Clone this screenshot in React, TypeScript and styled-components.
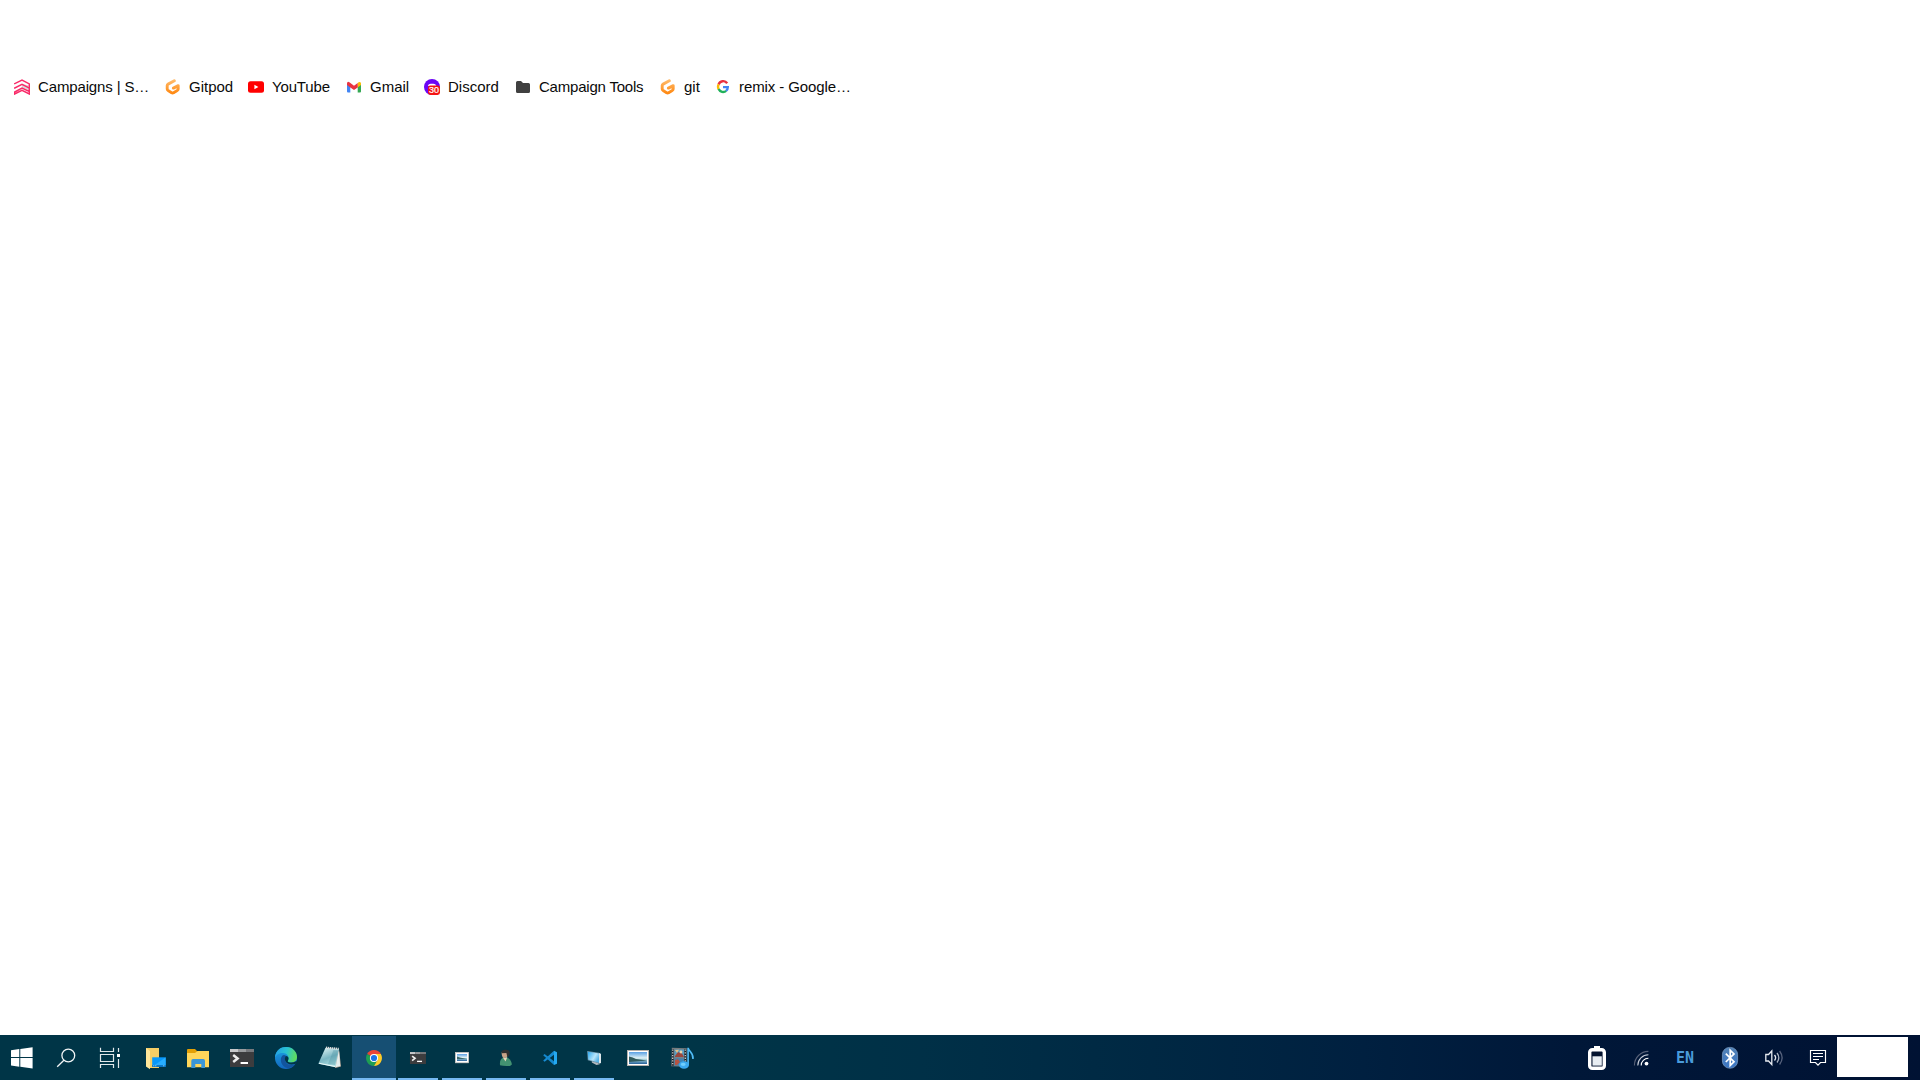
import React from "react";
import styled, { createGlobalStyle } from "styled-components";

const GlobalStyle = createGlobalStyle`
  * { box-sizing: border-box; }
  html, body { margin: 0; padding: 0; background: #fff; overflow: hidden; }
`;

const Screen = styled.div`
  width: 1920px;
  height: 1080px;
  display: flex;
  flex-direction: column;
  background: #fff;
  font-family: "Liberation Sans", Arial, sans-serif;
`;

const BookmarksBar = styled.nav`
  display: flex;
  align-items: center;
  height: 34px;
  margin-top: 70px;
  padding-left: 14px;
`;

const Bookmark = styled.div<{ $width: number; $gap: number; $tracking: number }>`
  display: flex;
  align-items: center;
  gap: ${(p) => p.$gap}px;
  width: ${(p) => p.$width}px;
  flex: none;
  color: #0a0a0a;
  font-size: 15px;
  line-height: 20px;
  letter-spacing: ${(p) => p.$tracking}px;
  white-space: nowrap;
`;

const Favicon = styled.svg`
  display: block;
  width: 16px;
  height: 16px;
  flex: none;
`;

const Page = styled.main`
  flex: 1;
`;

const Taskbar = styled.footer`
  display: flex;
  justify-content: space-between;
  height: 45px;
  background: linear-gradient(to right, #003547 0%, #003547 36%, #003047 48%, #002843 60%, #002040 71%, #001738 82%, #001233 100%);
`;

const Apps = styled.div`
  display: flex;
`;

const Slot = styled.div<{ $state?: "active" | "running" }>`
  display: flex;
  flex-direction: column;
  align-items: center;
  width: 44px;
  height: 45px;
  background: ${(p) =>
    p.$state === "active" ? "linear-gradient(transparent 1px, #164f73 1px)" : "transparent"};

  &::after {
    content: "";
    flex: none;
    width: ${(p) => (p.$state === "active" ? 44 : 40)}px;
    height: 2px;
    background: ${(p) => (p.$state ? "#76b9f2" : "transparent")};
  }
`;

const SlotIcon = styled.svg`
  display: block;
  width: 44px;
  height: 43px;
  flex: none;
`;

const Tray = styled.div`
  display: flex;
  padding-right: 12px;
`;

const TraySlot = styled.div<{ $width?: number }>`
  width: ${(p) => p.$width ?? 44}px;
  height: 45px;
`;

const Language = styled.div`
  width: 44px;
  padding-top: 2px;
  text-align: center;
  color: #4a9bdb;
  font: bold 15px/43px "DejaVu Sans Mono", monospace;
`;

const Clock = styled.div`
  width: 71px;
  height: 40px;
  margin-top: 2px;
  background: #fff;
`;

const GitpodIcon = () => (
  <Favicon viewBox="0 0 16 16">
    <defs>
      <linearGradient id="gp" x1="0" y1="0" x2="0" y2="1">
        <stop offset="0" stopColor="#ffb866" />
        <stop offset="1" stopColor="#ff8a14" />
      </linearGradient>
    </defs>
    <path d="M9.3 1.8 L3.1 5.1 Q2.2 5.6 2.2 6.6 V10.1 Q2.2 11.1 3.1 11.6 L6.6 13.7 Q7.6 14.2 8.6 13.7 L12.2 11.6 Q13.2 11 13.2 10 V6.6 L8.4 9.1" fill="none" stroke="url(#gp)" strokeWidth="2.9" strokeLinecap="round" strokeLinejoin="round" />
  </Favicon>
);

const bookmarks = [
  {
    label: "Campaigns | S…", width: 151, gap: 8, tracking: -0.14,
    icon: (
      <Favicon viewBox="0 0 16 16">
        <path d="M8 9 L15 12.5 V6.5 L8 5Z" fill="#dcdadb" />
        <path d="M.7 5.3 V4.7 L8 1.1 L15.3 4.9 V15 L8 11.3 L.7 15 V13 L8 9.1 L15 12.4 M.7 9.8 V9 L8 5.3 L15 8.9" fill="none" stroke="#f92a68" strokeWidth="1.45" />
      </Favicon>
    ),
  },
  { label: "Gitpod", width: 83, gap: 8, tracking: 0, icon: <GitpodIcon /> },
  {
    label: "YouTube", width: 98, gap: 8, tracking: -0.15,
    icon: (
      <Favicon viewBox="0 0 16 16">
        <rect x="0" y="2.3" width="16" height="11.5" rx="2.5" fill="#f00" />
        <path d="M6.4 5.8 L10.4 8 L6.4 10.2Z" fill="#fff" />
      </Favicon>
    ),
  },
  {
    label: "Gmail", width: 78, gap: 8, tracking: 0,
    icon: (
      <Favicon viewBox="0 0 16 16">
        <path d="M1 4.5 L4.3 6.8 V13.5 H2 Q1 13.5 1 12.5Z" fill="#4285f4" />
        <path d="M11.7 6.8 L15 4.5 V12.5 Q15 13.5 14 13.5 H11.7Z" fill="#34a853" />
        <path d="M11.7 4.1 L12.6 3.2 Q15 2.2 15 4.5 V6 L11.7 8.5Z" fill="#fbbc04" />
        <path d="M1 4.5 Q1.2 2 3.4 3.2 L8 6.8 L11.7 4 V8.5 L8 11 L4.3 8.5 L1 6Z" fill="#ea3340" />
      </Favicon>
    ),
  },
  {
    label: "Discord", width: 92, gap: 8, tracking: 0,
    icon: (
      <Favicon viewBox="0 0 16 16">
        <circle cx="8" cy="8" r="8" fill="#6b05f5" />
        <path d="M3.8 7 Q4.6 4.8 6.6 4.8 H9.4 Q11.6 4.8 12.4 7Z" fill="#fff" />
        <rect x="4" y="6.6" width="12" height="9.4" rx="2.4" fill="#f41414" />
        <text x="9.9" y="14.4" fontFamily="Liberation Sans" fontSize="9" fill="#fff" stroke="#fff" strokeWidth=".2" textAnchor="middle">30</text>
      </Favicon>
    ),
  },
  {
    label: "Campaign Tools", width: 144, gap: 7, tracking: -0.21,
    icon: (
      <Favicon viewBox="0 0 16 16">
        <path d="M0 3.5 Q0 2 1.5 2 H5 L7 4 H12.5 Q14 4 14 5.5 V12.5 Q14 14 12.5 14 H1.5 Q0 14 0 12.5Z" fill="#404040" />
      </Favicon>
    ),
  },
  { label: "git", width: 56, gap: 8, tracking: 0, icon: <GitpodIcon /> },
  {
    label: "remix - Google…", width: 140, gap: 7, tracking: -0.1,
    icon: (
      <Favicon viewBox="0 0 16 16" fill="none" strokeWidth="2.4">
        <path d="M11.2 4.2 A4.9 4.9 0 0 0 2.6 5.5" stroke="#ea3340" />
        <path d="M2.7 5.4 A4.9 4.9 0 0 0 2.7 10.2" stroke="#fbbc04" />
        <path d="M2.6 10.1 A4.9 4.9 0 0 0 10.2 11.8" stroke="#20b15a" />
        <path d="M7 8.1 H11.8 Q11.8 10.6 10.1 11.9" stroke="#4285f4" />
      </Favicon>
    ),
  },
];

const TerminalShape = () => (
  <>
    <rect x="10" y="14" width="24" height="18" fill="#3c3c3e" />
    <path d="M10 14H18V17H10Z" fill="#c7c8ca" />
    <path d="M18 14H26V17H18Z" fill="#999b9e" />
    <path d="M26 14H34V17H26Z" fill="#77797d" />
    <path d="M13.2 20 L17.6 23.5 L13.2 27" fill="none" stroke="#ededed" strokeWidth="2.5" />
    <path d="M20.6 28H28" stroke="#fff" strokeWidth="2" />
  </>
);

const PhotoShape = ({ small = false }: { small?: boolean }) => (
  <>
    <defs>
      <linearGradient id={small ? "skyS" : "sky"} x1="0" y1="0" x2="0" y2="1">
        <stop offset="0" stopColor="#5aa0e4" />
        <stop offset=".5" stopColor="#e0f2f5" />
        <stop offset=".65" stopColor="#9cc9d5" />
        <stop offset="1" stopColor="#235e99" />
      </linearGradient>
    </defs>
    {small ? (
      <>
        <rect x="15.4" y="17.4" width="13.2" height="10.4" fill="#fff" stroke="#cfc9c4" strokeWidth=".7" />
        <rect x="17" y="19" width="10" height="7" fill="url(#skyS)" />
        <path d="M17 21.6L20 22.5L27 24H17Z" fill="#3b686c" />
      </>
    ) : (
      <>
        <rect x="11.5" y="15.5" width="21" height="15" fill="#fff" stroke="#b5b0ab" />
        <rect x="13" y="17" width="18" height="12" fill="url(#sky)" />
        <path d="M13 21.5 Q17 22 20 24 L31 25.5 L25 26 L13 27Z" fill="#315b5d" />
      </>
    )}
  </>
);

type TaskbarApp = { icon: React.ReactNode; state?: "active" | "running" };

const apps: TaskbarApp[] = [
  { icon: <path d="M11 15.3 L19.3 14.1 V22 H11Z M20.3 14 L32.6 12.3 V22 H20.3Z M11 23H19.3V31.7L11 30.6Z M20.3 23H32.6V33.4L20.3 31.8Z" fill="#fff" /> },
  {
    icon: (
      <g fill="none" stroke="#f1f5f6" strokeWidth="1.3">
        <circle cx="24.3" cy="20.5" r="6.4" />
        <path d="M19.9 25.2 L13.2 31.7" />
      </g>
    ),
  },
  {
    icon: (
      <g fill="none" stroke="#e1e8ea" strokeWidth="1.2">
        <path d="M12.5 12.8V16.5H25.5V12.8 M12.5 19.5H25.5V26.5H12.5Z M12.5 33V29.5H25.5V33 M30.5 13V17 M30.5 24V33" />
        <rect x="29" y="19" width="3" height="3" fill="#fff" stroke="none" />
      </g>
    ),
  },
  {
    icon: (
      <>
        <path d="M14 13H27V33H17L14 31Z" fill="#f5ce66" />
        <path d="M14 13L18 16V34.2L14 31.5Z" fill="#ffe69a" />
        <rect x="20.2" y="22.3" width="13.6" height="9.5" fill="#0798fb" />
        <path d="M20.5 31.5L33.5 22.5V31.5Z" fill="#28adff" />
        <path d="M20.2 31H33.8" stroke="#0567b5" strokeWidth="1.5" />
        <path d="M21.3 30.8h1m1 0h1m7 0h1" stroke="#b4e6ff" strokeWidth="1" />
      </>
    ),
  },
  {
    icon: (
      <>
        <path d="M11 15Q11 14 12 14H19L21.5 16.5V18H11Z" fill="#e3a006" />
        <path d="M11 18H19L21.5 16H33V32.2H11Z" fill="#ffd65a" />
        <path d="M15.3 33V26Q15.3 24 17 24H27.3Q29 24 29 26V33H25.3V29H19.3V33Z" fill="#3a96d8" />
      </>
    ),
  },
  { icon: <TerminalShape /> },
  {
    icon: (
      <>
        <defs>
          <linearGradient id="edgeTop" x1="0" y1=".3" x2="1" y2=".5">
            <stop offset="0" stopColor="#249fe5" />
            <stop offset=".5" stopColor="#29c3d1" />
            <stop offset="1" stopColor="#62dc58" />
          </linearGradient>
          <linearGradient id="edgeSide" x1="0" y1="0" x2="0" y2="1">
            <stop offset="0" stopColor="#1ba6e6" />
            <stop offset="1" stopColor="#1266bd" />
          </linearGradient>
        </defs>
        <circle cx="22" cy="23" r="11" fill="url(#edgeSide)" />
        <path d="M11 22.5 C11.5 15 17 12 22 12 C29 12 33 17 33 22 C33 27 28 28.5 24.5 27 C22.8 26.2 24.8 25.2 24.5 22.7 C24 18.5 19.8 17.6 16 18.3 Q12.5 19.3 11 22.5Z" fill="url(#edgeTop)" />
        <path d="M18.5 20.4 C15 24 17 31.5 24 33.3 Q28.8 32.8 31.3 29 C27 31 21.5 29.5 21 25 Q20.8 22.8 22.2 21 Q20.3 19.5 18.5 20.4Z" fill="#13549d" />
        <path d="M22 21 C20.2 22.8 20.6 26.4 23.3 28.2 C27 30.3 30.7 29.2 33.5 28 C33.6 27 32.8 26 31.5 26.5 C29.3 27.7 26.5 27.9 24.5 27 C22.8 26.2 24.9 25.2 24.5 22.7 Q24 21 22 21Z" fill="#003547" />
      </>
    ),
  },
  {
    icon: (
      <>
        <defs>
          <linearGradient id="note" x1=".3" y1="0" x2=".7" y2="1">
            <stop offset="0" stopColor="#d5eef0" />
            <stop offset=".5" stopColor="#79b6c3" />
            <stop offset="1" stopColor="#b6e6e7" />
          </linearGradient>
        </defs>
        <path d="M31 14.5L33 31.5L27.5 33L25 30Z" fill="#b7a798" />
        <path d="M17.5 12.8L31 14L27.5 32.3L10.3 28.8Z" fill="url(#note)" />
        <path d="M31 15L32.2 31L27.5 32.3Z" fill="#e5eeee" />
        <path d="M18 12.6L30.8 13.8" stroke="#dadada" strokeWidth="2" strokeDasharray="1.3 .7" />
        <path d="M11 28.3L27 31.5" stroke="#edfafa" />
        <path d="M25.5 15L30 15.5L27 30L20 29Z" fill="#3f8798" opacity=".3" />
      </>
    ),
  },
  {
    state: "active",
    icon: (
      <>
        <path d="M22 23L15.1 19A8 8 0 0 1 28.9 19Z" fill="#e94436" />
        <path d="M15.1 19A8 8 0 0 0 22 31L25.5 25L22 23Z" fill="#1e9e52" />
        <path d="M28.9 19A8 8 0 0 1 22 31L25.5 25L22 19Z" fill="#fccb28" />
        <circle cx="22" cy="23" r="4.1" fill="#fff" />
        <circle cx="22" cy="23" r="3.1" fill="#1a73e8" />
      </>
    ),
  },
  { state: "running", icon: <g transform="translate(7.3 7.7) scale(.667)"><TerminalShape /></g> },
  { state: "running", icon: <PhotoShape small /> },
  {
    state: "running",
    icon: (
      <>
        <path d="M16 30.3Q15.4 24.5 18.8 22.8L22.5 22.3Q27.3 24.2 27.9 29.6L26 30.9Q20 31.4 16 30.3Z" fill="#429271" />
        <path d="M19 22.8L21.5 26.5L23.3 22.3Z" fill="#e6d8bc" />
        <path d="M17.6 17Q17.5 22 19.8 23.3L23.5 21.5L24.3 16.5Z" fill="#c7a287" />
        <path d="M17.4 18.3Q17 15.3 20.6 14.7Q25.5 14.2 25.7 17.6Q25.8 21.2 23.4 22.1L22.4 18Z" fill="#2e3030" />
      </>
    ),
  },
  {
    state: "running",
    icon: (
      <>
        <path d="M26 15.8L29 17.2V28.7L26 30.1Z" fill="#24a9f2" />
        <path d="M26 15.8L15.2 25.5L16.6 26.8L26 19.7Z" fill="#168bd2" />
        <path d="M15.2 20.2L16.6 19L26 26.3V30.1Z" fill="#1588cc" />
      </>
    ),
  },
  {
    state: "running",
    icon: (
      <>
        <defs>
          <linearGradient id="monitor" x1="0" y1="0" x2="1" y2=".6">
            <stop offset="0" stopColor="#28a7ef" />
            <stop offset=".65" stopColor="#b9e6fb" />
            <stop offset="1" stopColor="#55b2e6" />
          </linearGradient>
        </defs>
        <path d="M20 25.8L25 27.2L27.8 29.2L24.5 30L19.8 27.5Z" fill="#b3b9bf" />
        <path d="M15.2 16L27 17.8L29 19V28L27 28.5L15.8 25.2Z" fill="#6e94a8" />
        <path d="M15.8 16.7L27 18.5V27.7L16.3 24.6Z" fill="url(#monitor)" />
        <path d="M27 18L29 19.1V28L27 28.5Z" fill="#dce6ea" />
      </>
    ),
  },
  { icon: <PhotoShape /> },
  {
    icon: (
      <>
        <rect x="11.5" y="13" width="15" height="18.5" fill="#777b7d" transform="rotate(2 19 22)" />
        <path d="M12.7 14V31M25.3 14V31" stroke="#101c25" strokeWidth="1.8" />
        <path d="M12.7 14.5V31M25.3 14.5V31" stroke="#d5d7d5" strokeWidth="1.2" strokeDasharray="1.3 1.4" />
        <rect x="14.5" y="14.5" width="9.5" height="7.8" fill="#559dc2" />
        <rect x="14.5" y="23.5" width="9.5" height="7" fill="#3d84b5" />
        <path d="M15 21L18 17L22 18.5L24 22H15Z" fill="#9c463b" />
        <path d="M15 15L19 14.7L17 18Z" fill="#e4c084" />
        <path d="M15 25L18 24L20 27L17 30H15Z" fill="#b45443" />
        <circle cx="21" cy="17" r="1.4" fill="#e7d4ab" />
        <path d="M28.1 30.4V12.8C28.7 16.5 33.8 18 33 24" fill="none" stroke="#51bdf8" strokeWidth="1.6" />
        <ellipse cx="24" cy="30" rx="4.9" ry="3.8" fill="#3baaf0" />
        <ellipse cx="23.2" cy="29.3" rx="2.5" ry="1.6" fill="#70cefc" />
      </>
    ),
  },
];

export default function App() {
  return (
    <Screen>
      <GlobalStyle />
      <BookmarksBar>
        {bookmarks.map((b) => (
          <Bookmark key={b.label} $width={b.width} $gap={b.gap} $tracking={b.tracking}>
            {b.icon}
            <span>{b.label}</span>
          </Bookmark>
        ))}
      </BookmarksBar>
      <Page />
      <Taskbar>
        <Apps>
          {apps.map((app, i) => (
            <Slot key={i} $state={app.state}>
              <SlotIcon viewBox="0 0 44 43">{app.icon}</SlotIcon>
            </Slot>
          ))}
        </Apps>
        <Tray>
          <TraySlot>
            <SlotIcon viewBox="0 0 44 43">
              <path d="M19 15V11H25V15" fill="#fff" />
              <rect x="14.7" y="14.7" width="14.6" height="18.6" rx="2.6" fill="#04132f" stroke="#fff" strokeWidth="3.4" />
              <rect x="17.5" y="21.3" width="9.3" height="9.3" fill="#e8edf2" />
            </SlotIcon>
          </TraySlot>
          <TraySlot>
            <SlotIcon viewBox="0 0 44 43" fill="none" strokeWidth="1.1">
              <path d="M15.4 30.4A14 14 0 0 1 29.4 16.4" stroke="#566077" />
              <path d="M18.8 30.4A10.6 10.6 0 0 1 29.4 19.8" stroke="#c4cbd6" />
              <path d="M22.2 30.4A7.2 7.2 0 0 1 29.4 23.2" stroke="#fff" />
              <circle cx="27.5" cy="28.6" r="1.9" fill="#fff" />
            </SlotIcon>
          </TraySlot>
          <Language>EN</Language>
          <TraySlot>
            <SlotIcon viewBox="0 0 44 43">
              <defs>
                <linearGradient id="bt" x1="0" y1="0" x2="0" y2="1">
                  <stop offset="0" stopColor="#5382b5" />
                  <stop offset="1" stopColor="#3b76c5" />
                </linearGradient>
              </defs>
              <rect x="15.4" y="12.4" width="15.2" height="20.8" rx="7.2" fill="url(#bt)" stroke="#7da1ca" strokeWidth=".7" />
              <path d="M18.8 18.7L27 26.8L23.2 30.4V15.3L27 18.9L18.8 27" fill="none" stroke="#fff" strokeWidth="1.7" />
            </SlotIcon>
          </TraySlot>
          <TraySlot>
            <SlotIcon viewBox="0 0 44 43" fill="none" stroke="#e6eaf0" strokeWidth="1.3">
              <path d="M14.8 19.5H17.5L20.8 16V29.5L17.5 26H14.8Z" />
              <path d="M23.5 20Q25.8 22.8 23.5 25.5" />
              <path d="M26 18Q29.6 22.7 26 27.5" stroke="#aab3c1" />
              <path d="M28.6 16Q33.6 22.7 28.6 29.5" stroke="#56627c" />
            </SlotIcon>
          </TraySlot>
          <TraySlot $width={42}>
            <SlotIcon viewBox="0 0 44 43" fill="none" stroke="#fff" strokeWidth="1.15">
              <path d="M15.5 15.5H30.5V27.5H25.5L23 30.2L20.5 27.5H15.5Z M18 18.5H28 M18 21.5H28 M18 24.5H24" />
            </SlotIcon>
          </TraySlot>
          <Clock />
        </Tray>
      </Taskbar>
    </Screen>
  );
}
